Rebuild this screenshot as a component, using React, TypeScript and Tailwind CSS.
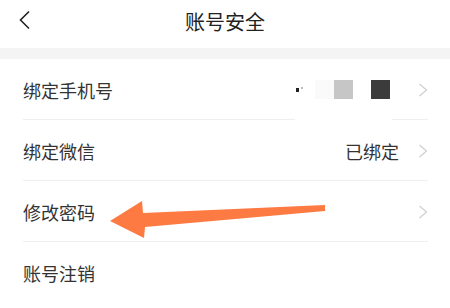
const font = { fontFamily: '"Noto Sans CJK SC", "Noto Sans", sans-serif' };

function Chevron() {
  return (
    <svg width="10" height="14" viewBox="0 0 10 14" className="shrink-0">
      <path d="M1.5 1 L8.5 7 L1.5 13" fill="none" stroke="#cfcfcf" strokeWidth="1.2" />
    </svg>
  );
}

function Row({ label, children, last, gap }: { label: string; children?: React.ReactNode; last?: boolean; gap?: boolean }) {
  return (
    <div className="ml-[23px] mr-[22px] h-[61px] flex items-center relative">
      <span className="text-[18px] text-[#333] leading-none">{label}</span>
      <div className="ml-auto flex items-center">
        {children}
        {!last && <Chevron />}
      </div>
      {!last && <div className="absolute left-0 right-0 bottom-0 h-px bg-[#efefef]" />}
      {gap && <div className="absolute left-[272px] w-[97px] bottom-0 h-px bg-white" />}
    </div>
  );
}

export default function App() {
  return (
    <div className="w-[450px] h-[308px] bg-white relative overflow-hidden" style={font}>
      <header className="h-[48px] flex items-center justify-center relative">
        <svg className="absolute left-[18px] top-[10px]" width="14" height="20" viewBox="0 0 14 20">
          <path d="M11 1.5 L2.5 10 L11 18.5" fill="none" stroke="#222" strokeWidth="1.6" />
        </svg>
        <h1 className="text-[20px] text-[#222] leading-none -mt-[4px]">账号安全</h1>
      </header>
      <div className="h-[11px] bg-[#f4f4f4]" />
      <Row label="绑定手机号" gap>
        <div className="flex items-center mr-[28px]">
          <span className="w-[3px] h-[4px] bg-[#222] mr-[2px]" />
          <span className="w-[2px] h-[2px] bg-[#bbb] mr-[12px] -mt-[4px]" />
          <span className="w-[19px] h-[19px] bg-[#fafafa]" />
          <span className="w-[19px] h-[19px] bg-[#c6c6c6]" />
          <span className="w-[19px] h-[19px] ml-[18px] bg-[#3b3b3b]" />
        </div>
      </Row>
      <Row label="绑定微信">
        <span className="text-[18px] text-[#333] leading-none mr-[19px]">已绑定</span>
      </Row>
      <Row label="修改密码" />
      <Row label="账号注销" last />
      <svg className="absolute left-0 top-0 pointer-events-none" width="450" height="308" viewBox="0 0 450 308">
        <polygon
          points="110,221 142,201 143,213 325,205 325,211 145,227 144,238"
          fill="#fe7a43"
        />
      </svg>
    </div>
  );
}
